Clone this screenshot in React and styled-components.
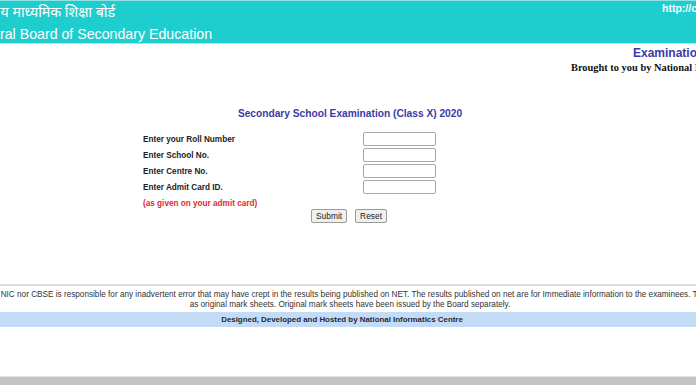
import React from 'react'
import styled, { createGlobalStyle } from 'styled-components'

const GlobalStyle = createGlobalStyle`
  html, body {
    margin: 0;
    padding: 0;
    background: #fff;
    overflow: hidden;
  }
`

const Page = styled.div`
  width: 696px;
  height: 385px;
  overflow: hidden;
  display: flex;
  flex-direction: column;
  font-family: 'Liberation Sans', Arial, sans-serif;
  color: #222;
`

const Header = styled.header`
  height: 44px;
  box-sizing: border-box;
  background: #1ecdcd;
  border-top: 1px solid #8fe3e3;
  border-bottom: 1px solid #9fe9e9;
  display: grid;
  grid-template-columns: 662px auto;
  color: #fff;
  white-space: nowrap;
  overflow: hidden;
`

const Brand = styled.div`
  margin-left: ${props => props.shift}px;
  padding-top: 3px;
`

const HindiName = styled.div`
  font-family: 'Noto Sans Devanagari', 'Lohit Devanagari', 'Noto Sans', sans-serif;
  font-size: 14.2px;
  line-height: 19px;
  margin-left: 4px;
`

const EnglishName = styled.div`
  font-size: 14.2px;
  line-height: 18px;
  margin-top: 2px;
`

const SiteUrl = styled.div`
  font-size: 10.5px;
  font-weight: bold;
  line-height: 12px;
  padding-top: 1px;
`

const Strip = styled.div`
  white-space: nowrap;
  padding-left: ${props => props.indent}px;
`

const ExamName = styled(Strip)`
  margin-top: 1px;
  font-size: 12px;
  font-weight: bold;
  line-height: 16px;
  color: #3a3aa6;
`

const Credit = styled(Strip)`
  font-family: 'Liberation Serif', 'Times New Roman', serif;
  font-size: 10.4px;
  font-weight: bold;
  line-height: 14px;
  color: #111;
`

const Title = styled.h1`
  margin: 32px 0 0;
  padding-left: 4px;
  text-align: center;
  font-size: 10.2px;
  line-height: 14px;
  font-weight: bold;
  color: #3a3aa6;
`

const FormGrid = styled.div`
  margin: 10px 0 0 143px;
  display: grid;
  grid-template-columns: 220px 73px;
  grid-auto-rows: 16px;
  align-items: center;
`

const Label = styled.label`
  font-size: 8.2px;
  font-weight: bold;
  color: ${props => (props.note ? '#e02a30' : '#222')};
`

const TextBox = styled.input`
  width: 73px;
  height: 14px;
  box-sizing: border-box;
  margin: 0;
  padding: 0 2px;
  border: 1px solid #a8a8a8;
  border-radius: 2px;
  background: #fff;
`

const Actions = styled.div`
  margin-top: -2px;
  display: flex;
  justify-content: center;
  gap: 8px;
  padding-left: 2px;
`

const Button = styled.button`
  height: 14px;
  padding: 0 4px;
  box-sizing: border-box;
  font-family: 'Liberation Sans', Arial, sans-serif;
  font-size: 8.4px;
  line-height: 12px;
  color: #222;
  background: #efefef;
  border: 1px solid #9a9a9a;
  border-radius: 2px;
`

const Rule = styled.hr`
  margin: 61px 0 0;
  height: 2px;
  border: 0;
  background: #dedede;
`

const Disclaimer = styled.div`
  margin-top: 4px;
  font-size: 8.2px;
  line-height: 10px;
  color: #333;
  white-space: nowrap;
`

const DisclaimerLine = styled.div`
  text-align: ${props => (props.lead ? 'left' : 'center')};
  margin-left: ${props => (props.lead ? '-28px' : '0')};
  padding-left: ${props => (props.lead ? '0' : '4px')};
`

const FooterBar = styled.footer`
  margin-top: 2px;
  height: 15px;
  background: #c4dbf6;
  text-align: center;
  font-size: 7.9px;
  font-weight: bold;
  line-height: 15px;
  color: #1d2a3a;
  padding-right: 12px;
`

const BottomBar = styled.div`
  margin-top: auto;
  height: 9px;
  box-sizing: border-box;
  background: #c4c4c4;
  border-top: 1px solid #e2e2e2;
`

const fields = [
  'Enter your Roll Number',
  'Enter School No.',
  'Enter Centre No.',
  'Enter Admit Card ID.',
]

export default function App() {
  return (
    <>
      <GlobalStyle />
      <Page>
        <Header>
          <Brand shift={-30}>
            <HindiName>केन्द्रीय माध्यमिक शिक्षा बोर्ड</HindiName>
            <EnglishName>Central Board of Secondary Education</EnglishName>
          </Brand>
          <SiteUrl>http://cbseresults.nic.in</SiteUrl>
        </Header>

        <ExamName indent={633}>Examination Results 2020</ExamName>
        <Credit indent={571}>Brought to you by National Informatics Centre</Credit>

        <Title>Secondary School Examination (Class X) 2020</Title>

        <FormGrid>
          {fields.map(f => (
            <React.Fragment key={f}>
              <Label>{f}</Label>
              <TextBox type="text" />
            </React.Fragment>
          ))}
          <Label note>(as given on your admit card)</Label>
        </FormGrid>

        <Actions>
          <Button type="button">Submit</Button>
          <Button type="button">Reset</Button>
        </Actions>

        <Rule />

        <Disclaimer>
          <DisclaimerLine lead>
            Neither NIC nor CBSE is responsible for any inadvertent error that may have crept in the results being published on NET. The results published on net are for Immediate information to the examinees. These cannot be treated
          </DisclaimerLine>
          <DisclaimerLine>
            as original mark sheets. Original mark sheets have been issued by the Board separately.
          </DisclaimerLine>
        </Disclaimer>

        <FooterBar>Designed, Developed and Hosted by National Informatics Centre</FooterBar>

        <BottomBar />
      </Page>
    </>
  )
}
